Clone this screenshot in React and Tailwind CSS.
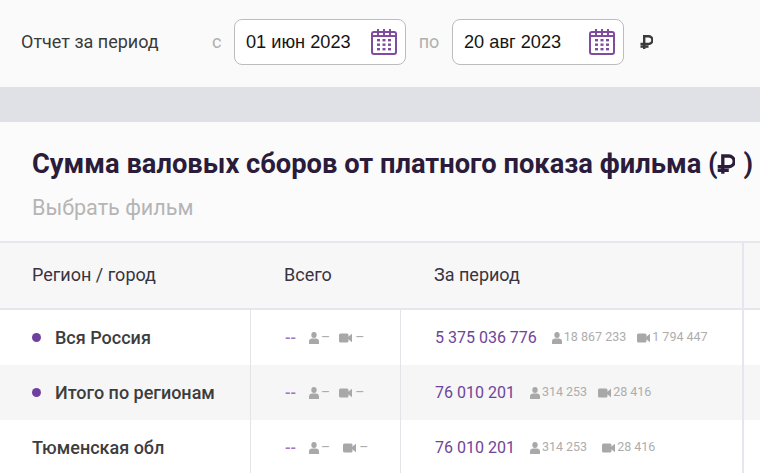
const rows = [
  { name: 'Вся Россия', dot: true, sum: '5 375 036 776', people: '18 867 233', shows: '1 794 447', camGap: 'ml-[9px]' },
  { name: 'Итого по регионам', dot: true, alt: true, sum: '76 010 201', people: '314 253', shows: '28 416', camGap: 'ml-[9px]' },
  { name: 'Тюменская обл', sum: '76 010 201', people: '314 253', shows: '28 416', camGap: 'ml-[13px]', last: true },
];

function RubleIcon({ className }) {
  return (
    <svg viewBox="0 0 13 14" className={className} fill="none" stroke="currentColor" strokeWidth="2.4">
      <path d="M4.2 14V1.2h4.3a3.9 3.9 0 0 1 0 7.8H0.5" />
      <path d="M0.5 11.6h8" />
    </svg>
  );
}

function CalendarIcon() {
  return (
    <svg width="26" height="27" viewBox="0 0 26 27" className="shrink-0">
      <rect x="1" y="4" width="24" height="22" rx="2" fill="none" stroke="#7f4c9f" strokeWidth="2" />
      <path d="M1 8h24" stroke="#7f4c9f" strokeWidth="2" />
      <path d="M7 1v6M13 1v6M19 1v6" stroke="#7f4c9f" strokeWidth="2" />
      <g fill="#7f4c9f">
        <rect x="6" y="11" width="3" height="2.4" /><rect x="11.5" y="11" width="3" height="2.4" /><rect x="17" y="11" width="3" height="2.4" />
        <rect x="6" y="15.5" width="3" height="2.4" /><rect x="11.5" y="15.5" width="3" height="2.4" /><rect x="17" y="15.5" width="3" height="2.4" />
        <rect x="6" y="20" width="3" height="2.4" /><rect x="11.5" y="20" width="3" height="2.4" /><rect x="17" y="20" width="3" height="2.4" />
      </g>
    </svg>
  );
}

function DateBox({ value }) {
  return (
    <div className="flex h-[46px] w-[172px] items-center justify-between rounded-lg border border-[#bcbcbc] bg-white pl-[11px] pr-[8px] font-['Liberation_Sans',sans-serif] text-[18.2px] text-[#151515]">
      <span className="pt-[2px]">{value}</span>
      <CalendarIcon />
    </div>
  );
}

function PersonIcon() {
  return (
    <svg width="10" height="12" viewBox="0 0 10 12" className="shrink-0">
      <ellipse cx="5" cy="3" rx="2.7" ry="3" fill="#a8a8a8" />
      <path d="M0 12V9.2C0 7.4 1.5 6.4 3 6.4h4c1.5 0 3 1 3 2.8V12z" fill="#a8a8a8" />
    </svg>
  );
}

function CameraIcon() {
  return (
    <svg width="13" height="10" viewBox="0 0 13 10" className="shrink-0">
      <rect x="0" y="0.5" width="9.5" height="9" rx="1.5" fill="#a8a8a8" />
      <path d="M9 4l4-3.2v8.4L9 6z" fill="#a8a8a8" />
    </svg>
  );
}

function Row({ row }) {
  return (
    <div className={`flex h-[55px] shrink-0 ${row.alt ? 'bg-[#f6f6f6]' : 'bg-white'}`}>
      <div className="flex w-[250px] shrink-0 items-center pl-[32px] text-[18px] font-medium text-[#3d3d3d]">
        {row.dot && <span className="mr-[14px] h-[9px] w-[9px] rounded-full bg-[#7040a0]" />}
        {row.name}
      </div>
      <div className="flex w-[150px] shrink-0 items-center border-l border-[#e4e4e8] pl-[34px] text-[14px] text-[#adadad]">
        <span className="mr-[15px] w-[9px] whitespace-nowrap text-[16px] font-medium text-[#9a63c8] opacity-90 [font-variant-ligatures:none]">--</span>
        <PersonIcon />
        <span className="ml-[2px]">–</span>
        <span className={`flex items-center gap-[3px] ${row.camGap}`}>
          <CameraIcon />
          <span>–</span>
        </span>
      </div>
      <div className="flex w-[342px] shrink-0 items-center border-l border-[#e4e4e8] pl-[34px]">
        <span className="text-[16px] text-[#6e4499]">{row.sum}</span>
        <span className="ml-[15px] flex items-center gap-[2px] text-[12.5px] text-[#adadad]">
          <PersonIcon />
          {row.people}
        </span>
        <span className={`flex items-center gap-[2px] text-[12.5px] text-[#adadad] ${row.last ? 'ml-[15px]' : 'ml-[11px]'}`}>
          <CameraIcon />
          {row.shows}
        </span>
      </div>
      <div className="flex-1 border-l-2 border-[#e6e6ee]" />
    </div>
  );
}

export default function App() {
  return (
    <div className="h-[473px] w-[760px] overflow-hidden bg-white font-['Roboto',sans-serif]">
      <div className="flex h-[87px] items-center bg-[#fafafa] pb-[4px] pl-[21px]">
        <span className="w-[191px] text-[18px] text-[#3a3a3a]">Отчет за период</span>
        <span className="w-[22px] text-[18px] text-[#b0b0b0]">с</span>
        <DateBox value="01 июн 2023" />
        <span className="w-[46px] text-center text-[18px] text-[#b0b0b0]">по</span>
        <DateBox value="20 авг 2023" />
        <RubleIcon className="ml-[16px] h-[14px] w-[13px] text-[#3a3a3a]" />
      </div>
      <div className="h-[35px] bg-[#e0e1e6]" />
      <div className="h-[119px] bg-[#fbfbfc] pl-[32px] pt-[26px]">
        <h1 className="flex items-center text-[27.3px] font-bold leading-[32px] text-[#2a1c3a]">
          Сумма валовых сборов от платного показа фильма (
          <RubleIcon className="ml-[-1px] h-[22px] w-[18px]" />
          <span className="ml-[9px]">)</span>
        </h1>
        <div className="mt-[14px] text-[21.6px] leading-[28px] text-[#b5b5b5]">Выбрать фильм</div>
      </div>
      <div className="flex h-[69px] border-y-2 border-[#e6e6ee] bg-[#f7f7f8] pb-[2px] text-[18px] text-[#3a3340]">
        <div className="flex w-[284px] shrink-0 items-center pl-[32px]">Регион / город</div>
        <div className="flex w-[150px] shrink-0 items-center">Всего</div>
        <div className="flex w-[308px] shrink-0 items-center">За период</div>
        <div className="-mb-[2px] flex-1 border-l-2 border-[#e6e6ee]" />
      </div>
      {rows.map((row) => (
        <Row key={row.name} row={row} />
      ))}
    </div>
  );
}
